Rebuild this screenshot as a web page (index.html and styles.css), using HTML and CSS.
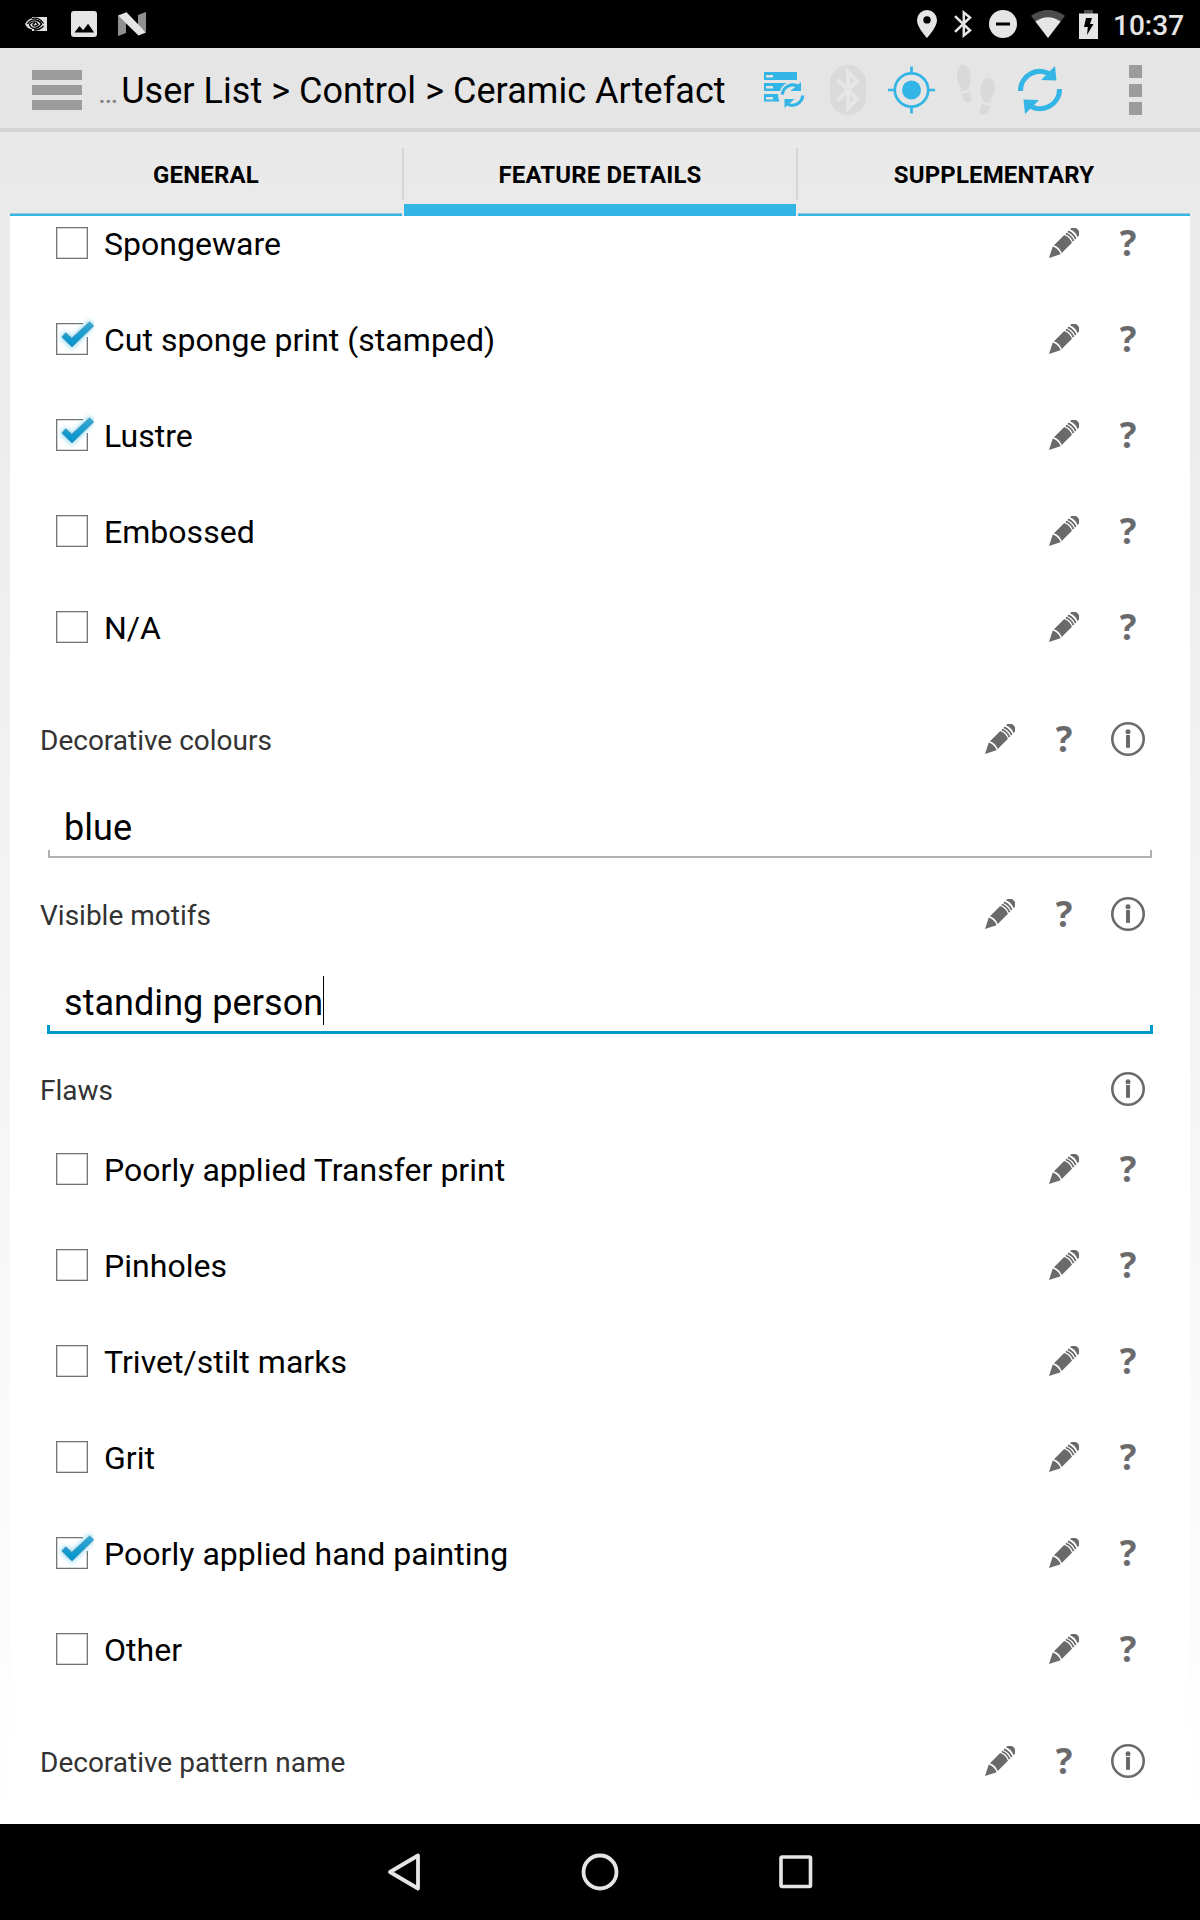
FILE: index.html
```html
<!DOCTYPE html>
<html lang="en">
<head>
<meta charset="utf-8">
<title>Ceramic Artefact</title>
<link rel="stylesheet" href="styles.css">
</head>
<body>
<svg class="defs" width="0" height="0" aria-hidden="true">
  <defs>
    <linearGradient id="tick" x1="0" y1="0" x2="0" y2="1">
      <stop offset="0" stop-color="#33a8d6"/><stop offset="1" stop-color="#0093cc"/>
    </linearGradient>
    <filter id="glow" x="-40%" y="-40%" width="180%" height="180%"><feGaussianBlur stdDeviation="2.6"/></filter>
    <symbol id="pencil" viewBox="0 0 30 30">
      <g transform="translate(0 30) rotate(-45)">
        <path d="M0 0L10.800-5.500Q13.500 0 10.800 5.500zM12.500-5.500H27Q29.500 0 27 5.500H12.500Q15.200 0 12.500-5.500zM35-5.500C38.500-5.500 40.500-3 40.500 0S38.500 5.500 35 5.500Q37.500 0 35-5.500z" fill="#6a6a6a"/>
        <path d="M29.200-5.500Q31.700 0 29.200 5.500M32.200-5.500Q34.700 0 32.200 5.500" fill="none" stroke="#6a6a6a" stroke-width="1.700"/>
      </g>
    </symbol>
    <symbol id="info" viewBox="0 0 34 34">
      <circle cx="17" cy="17" r="15.7" fill="none" stroke="#6a6a6a" stroke-width="2.6"/>
      <circle cx="17" cy="9.8" r="2.5" fill="#6a6a6a"/>
      <path d="M15 13h4v12.8h-4z" fill="#6a6a6a"/>
    </symbol>
    <symbol id="box" viewBox="0 0 44 44">
      <rect x="6.65" y="6.65" width="30.7" height="30.7" fill="#fff" stroke="#747474" stroke-width="1.3"/>
    </symbol>
    <symbol id="box-on" viewBox="0 0 44 44">
      <path d="M33 6.65H6.65v30.7h30.7V20" fill="#fff" stroke="#747474" stroke-width="1.3"/>
      <path d="M10 20l5.400-5.500 6.300 5.800L39.600 3l5.200 5.300L22 32z" fill="#6fcff2" opacity=".8" filter="url(#glow)"/>
      <path d="M11.800 20l4-4.200 6 5.400L39.600 5l4 3.900L22 30z" fill="url(#tick)" stroke="#4d93ae" stroke-width=".9"/>
    </symbol>
  </defs>
</svg>

<header class="status">
  <div class="status-left">
    <svg width="22" height="14" viewBox="0 0 22 14"><path d="M7 0h15v14H7v-1.500Q2 11.500 0 7Q3 1.800 7 1.300z" fill="#e0e0e0"/><g fill="none" stroke="#000" stroke-width="1.300"><path d="M2.300 7Q5.500 2.300 11 3Q15 4 16.500 7Q13 11.800 8.500 11.300Q4.500 10 4.500 7Q7.500 4 11 5.200L13 7.500Q10.500 10.200 8 8.500Q7.500 6.500 10 6.500"/><path d="M7 1.500Q14-.5 18.500 6.500M9 13Q15 13 18.500 9" /></g></svg>
    <svg width="26" height="26" viewBox="0 0 26 26"><rect width="26" height="26" rx="3" fill="#e5e5e5"/><path d="M3.500 21.500l5-6.500 3.600 4.300 5-6.500 6 8.700z" fill="#000"/></svg>
    <svg width="28" height="24" viewBox="0 0 28 24"><path d="M0 3.500l8 7V21L0 24zM20 3l8-3v20l-8-7z" fill="#8f8f8f"/><path d="M0 3.500L8.500.2 28 20.500 20.500 23.500z" fill="#e5e5e5"/></svg>
  </div>
  <div class="status-right">
    <svg width="20" height="28" viewBox="0 0 20 28"><path d="M10 0a10 10 0 0 0-10 10c0 7.500 10 18 10 18s10-10.500 10-18A10 10 0 0 0 10 0zm0 6.200a3.700 3.700 0 1 1 0 7.400 3.700 3.700 0 0 1 0-7.400z" fill="#e5e5e5"/></svg>
    <svg width="18" height="28" viewBox="0 0 18 28"><path d="M1 6.200L16 20.500 9.800 25.500V2.500L16 7.500 1 21.800" fill="none" stroke="#e5e5e5" stroke-width="2.500"/></svg>
    <svg width="28" height="28" viewBox="0 0 28 28"><circle cx="14" cy="14" r="14" fill="#e5e5e5"/><path d="M7 12.500h14v3H7z" fill="#000"/></svg>
    <svg width="34" height="28" viewBox="0 0 34 28"><path d="M0 5.800Q17-5.800 34 5.800L17 28z" fill="#4d4d4d"/><path d="M4.400 11.500Q17 3 29.600 11.500L17 28z" fill="#e5e5e5"/></svg>
    <svg width="19" height="29" viewBox="0 0 19 29"><path d="M5 0h9v4H5z" fill="#4d4d4d"/><path d="M0 3.500h19V29H0z" fill="#e5e5e5"/><path d="M7 8h6l-2 6h3.500L8 25l.8-8H5z" fill="#000"/></svg>
    <span class="clock">10:37</span>
  </div>
</header>

<div class="appbar">
  <div class="burger"><i></i><i></i><i></i></div>
  <h1 class="title"><span class="ellipsis">…</span>User List &gt; Control &gt; Ceramic Artefact</h1>
  <div class="tools">
    <svg width="64" height="60" viewBox="0 0 64 60"><g fill="#33b5e5"><path d="M12 12h33v8H12zM12 23h23q-5 2-7 8H12zM12 34h14q0 4 1.500 7.500H12z"/></g><path d="M14 15h7v2.500h-7zM14 26h7v2.500h-7zM14 37h7v2.500h-7z" fill="#e5e5e5"/><g fill="none" stroke="#33b5e5" stroke-width="3.200"><path d="M30.300 34.500A10.500 10.500 0 0 1 47 27M50.700 35.500A10.500 10.500 0 0 1 34.500 43.500"/></g><path d="M49 22v9h-10.500zM32.500 48v-9h10z" fill="#33b5e5"/></svg>
    <svg width="64" height="60" viewBox="0 0 64 60"><rect x="14" y="5" width="36" height="50" rx="18" ry="17" fill="#dadada"/><path d="M21.500 19.500L41 39 32 48V12l9 9-19.500 19.500" fill="none" stroke="#e6e6e6" stroke-width="4"/></svg>
    <svg width="64" height="60" viewBox="0 0 64 60"><circle cx="31.500" cy="30" r="9.500" fill="#33b5e5"/><circle cx="31.500" cy="30" r="16.700" fill="none" stroke="#33b5e5" stroke-width="2.700"/><path d="M31.500 6.500V14M31.500 46v7.500M8 30h7.500M47.500 30H55" stroke="#33b5e5" stroke-width="2.700"/></svg>
    <svg width="64" height="60" viewBox="0 0 64 60"><g fill="#d9d9d9"><path d="M17 5.500c5-2 9.500 4 9.500 12 0 6-1.500 8.500-2 12l-7 1.800c-.5-4-4.500-7-4.500-15 0-5 1-9.500 4-10.800z"/><path d="M18 34l8-2c1 3 2 4 1.800 6.500-.3 3-2.500 4-4.500 3.500-4-.8-4.300-4-5.300-8z"/><path d="M46 18c-5-1.500-9.500 4-9.500 11 0 6 1.500 9 2 12.500l7 1.800c.5-4 5.500-8 5.500-15.300 0-6-1.500-9-5-10z"/><path d="M38 44l8 2c-1 4-1.500 9-6 9-3.500 0-4.500-2.500-4-5.500z"/></g></svg>
    <svg width="64" height="60" viewBox="0 0 64 60"><g fill="none" stroke="#33b5e5" stroke-width="5"><path d="M12.500 31A19.300 19.300 0 0 1 43.500 15.300M51.500 29A19.300 19.300 0 0 1 20.500 44.700"/></g><path d="M47 6l1.500 14.500-15.500-.5zM17 54l-1.500-14.500 15.500.5z" fill="#33b5e5"/></svg>
  </div>
  <div class="overflow"><i></i><i></i><i></i></div>
</div>

<div class="page">
  <nav class="tabs">
    <div class="tab">GENERAL</div>
    <div class="divider"></div>
    <div class="tab active">FEATURE DETAILS</div>
    <div class="divider"></div>
    <div class="tab">SUPPLEMENTARY</div>
  </nav>

  <main class="panel">
    <div class="form">
      <div class="row"><svg class="check"><use href="#box"/></svg><span class="name">Spongeware</span><svg class="pencil"><use href="#pencil"/></svg><b class="help">?</b></div>
      <div class="row"><svg class="check"><use href="#box-on"/></svg><span class="name">Cut sponge print (stamped)</span><svg class="pencil"><use href="#pencil"/></svg><b class="help">?</b></div>
      <div class="row"><svg class="check"><use href="#box-on"/></svg><span class="name">Lustre</span><svg class="pencil"><use href="#pencil"/></svg><b class="help">?</b></div>
      <div class="row"><svg class="check"><use href="#box"/></svg><span class="name">Embossed</span><svg class="pencil"><use href="#pencil"/></svg><b class="help">?</b></div>
      <div class="row"><svg class="check"><use href="#box"/></svg><span class="name">N/A</span><svg class="pencil"><use href="#pencil"/></svg><b class="help">?</b></div>

      <div class="label spaced"><span class="name">Decorative colours</span><svg class="pencil"><use href="#pencil"/></svg><b class="help">?</b><svg class="info"><use href="#info"/></svg></div>
      <div class="field"><span class="value">blue</span><div class="underline"></div></div>

      <div class="label"><span class="name">Visible motifs</span><svg class="pencil"><use href="#pencil"/></svg><b class="help">?</b><svg class="info"><use href="#info"/></svg></div>
      <div class="field focused"><span class="value">standing person<i class="caret"></i></span><div class="underline"></div></div>

      <div class="label"><span class="name">Flaws</span><svg class="info"><use href="#info"/></svg></div>
      <div class="row"><svg class="check"><use href="#box"/></svg><span class="name">Poorly applied Transfer print</span><svg class="pencil"><use href="#pencil"/></svg><b class="help">?</b></div>
      <div class="row"><svg class="check"><use href="#box"/></svg><span class="name">Pinholes</span><svg class="pencil"><use href="#pencil"/></svg><b class="help">?</b></div>
      <div class="row"><svg class="check"><use href="#box"/></svg><span class="name">Trivet/stilt marks</span><svg class="pencil"><use href="#pencil"/></svg><b class="help">?</b></div>
      <div class="row"><svg class="check"><use href="#box"/></svg><span class="name">Grit</span><svg class="pencil"><use href="#pencil"/></svg><b class="help">?</b></div>
      <div class="row"><svg class="check"><use href="#box-on"/></svg><span class="name">Poorly applied hand painting</span><svg class="pencil"><use href="#pencil"/></svg><b class="help">?</b></div>
      <div class="row"><svg class="check"><use href="#box"/></svg><span class="name">Other</span><svg class="pencil"><use href="#pencil"/></svg><b class="help">?</b></div>

      <div class="label spaced"><span class="name">Decorative pattern name</span><svg class="pencil"><use href="#pencil"/></svg><b class="help">?</b><svg class="info"><use href="#info"/></svg></div>
    </div>
  </main>
</div>

<footer class="navbar">
  <svg width="40" height="40" viewBox="0 0 40 40"><path d="M34 3.500v33L6 20z" fill="none" stroke="#e5e5e5" stroke-width="3.800" stroke-linejoin="round"/></svg>
  <svg width="40" height="40" viewBox="0 0 40 40"><circle cx="20" cy="20" r="16.500" fill="none" stroke="#e5e5e5" stroke-width="3.800"/></svg>
  <svg width="40" height="40" viewBox="0 0 40 40"><rect x="5" y="5" width="29.500" height="29.500" rx="1" fill="none" stroke="#e5e5e5" stroke-width="3.600"/></svg>
</footer>
</body>
</html>
```

FILE: styles.css
```css
* { box-sizing: border-box; }

body {
  margin: 0;
  width: 1200px;
  height: 1920px;
  display: flex;
  flex-direction: column;
  overflow: hidden;
  font-family: Roboto, "Liberation Sans", sans-serif;
  color: #000;
  background: #fff;
}

svg { display: block; flex: none; }
.defs { position: absolute; }

/* Status bar */
.status {
  height: 48px;
  flex: none;
  display: flex;
  justify-content: space-between;
  padding: 0 17px 0 25px;
  background: #000;
}
.status-left, .status-right { display: flex; align-items: center; }
.status-left { gap: 24px; }
.status-left svg:last-child { margin-left: -3px; }
.status-right svg { margin-right: 17px; }
.status-right svg:nth-child(3), .status-right svg:nth-child(4) { margin-right: 14px; }
.status-right svg:nth-child(5) { margin-right: 15px; }
.clock {
  width: 70px;
  font-size: 28px;
  line-height: 48px;
  font-weight: 500;
  color: #e5e5e5;
  padding-top: 3px;
  white-space: nowrap;
}

/* App bar */
.appbar {
  height: 84px;
  flex: none;
  display: flex;
  align-items: center;
  padding: 0 57px 0 32px;
  background: #e5e5e5;
  border-bottom: 4px solid #d4d4d4;
}
.burger { width: 50px; display: flex; flex-direction: column; gap: 5px; padding-top: 4px; }
.burger i { height: 10px; background: #9c9c9c; }
.title {
  width: 654px;
  margin: 0;
  padding: 8px 0 0 16px;
  font-size: 36px;
  line-height: 42px;
  font-weight: 400;
  letter-spacing: 0.05px;
  white-space: nowrap;
}
.ellipsis { margin-right: 3px; font-size: 30px; color: #808080; }
.tools { display: flex; padding-top: 4px; margin-left: 16px; }
.overflow { width: 13px; margin-left: 57px; display: flex; flex-direction: column; gap: 5.5px; padding-top: 4px; }
.overflow i { height: 13px; background: #9c9c9c; }

/* Page with tabs */
.page {
  flex: 1;
  min-height: 0;
  display: flex;
  flex-direction: column;
  padding: 0 10px;
  background: linear-gradient(#e9e9e9, #fff);
}
.tabs { height: 84px; flex: none; display: flex; }
.tab {
  flex: 1;
  height: 84px;
  padding-top: 3px;
  text-align: center;
  font-size: 24px;
  line-height: 80px;
  font-weight: 700;
  letter-spacing: 0.15px;
  box-shadow: inset 0 -2px #33b5e5, inset 0 -3px #a0c8d8;
}
.tab.active { box-shadow: inset 0 -12px #33b5e5; }
.divider { width: 2px; height: 52px; margin-top: 16px; background: #d4d4d4; }

/* Form */
.panel { flex: 1; min-height: 0; overflow: hidden; background: #fff; }
.form { margin-top: -21px; padding: 0 30px; }
.row { height: 96px; display: flex; align-items: center; padding-left: 10px; }
.name { flex: 1; white-space: nowrap; }
.row .name { padding-left: 10px; font-size: 32px; line-height: 38px; padding-top: 2px; letter-spacing: 0.03px; }
.label { height: 64px; display: flex; align-items: center; }
.label .name { font-size: 28px; line-height: 34px; color: #333; padding-top: 4px; }
.spaced { margin-top: 32px; }
.check { width: 44px; height: 44px; overflow: visible; }
.pencil { width: 30px; height: 30px; margin: 0 17px; }
.info { width: 34px; height: 34px; margin: 0 15px; }
.help {
  width: 64px;
  text-align: center;
  font: 700 35px/48px "Open Sans", "Noto Sans", sans-serif;
  color: #6a6a6a;
}

.field { height: 111px; padding: 33px 8px 0; }
.value {
  display: flex;
  align-items: center;
  height: 46px;
  padding: 2px 0 0 16px;
  font-size: 36px;
  letter-spacing: 0.05px;
}
.underline {
  height: 8px;
  border: 2px solid #b0b0b0;
  border-top: 0;
}
.focused { padding: 30px 7px 0; }
.focused .value { height: 49px; padding-left: 17px; padding-top: 5px; }
.focused .underline { height: 9px; border: 3px solid #0099cc; border-top: 0; }
.caret { width: 1px; height: 49px; margin-top: -6px; background: #000; }

/* System navigation */
.navbar {
  height: 96px;
  flex: none;
  display: flex;
  justify-content: center;
  align-items: center;
  gap: 156px;
  background: #000;
}
```
